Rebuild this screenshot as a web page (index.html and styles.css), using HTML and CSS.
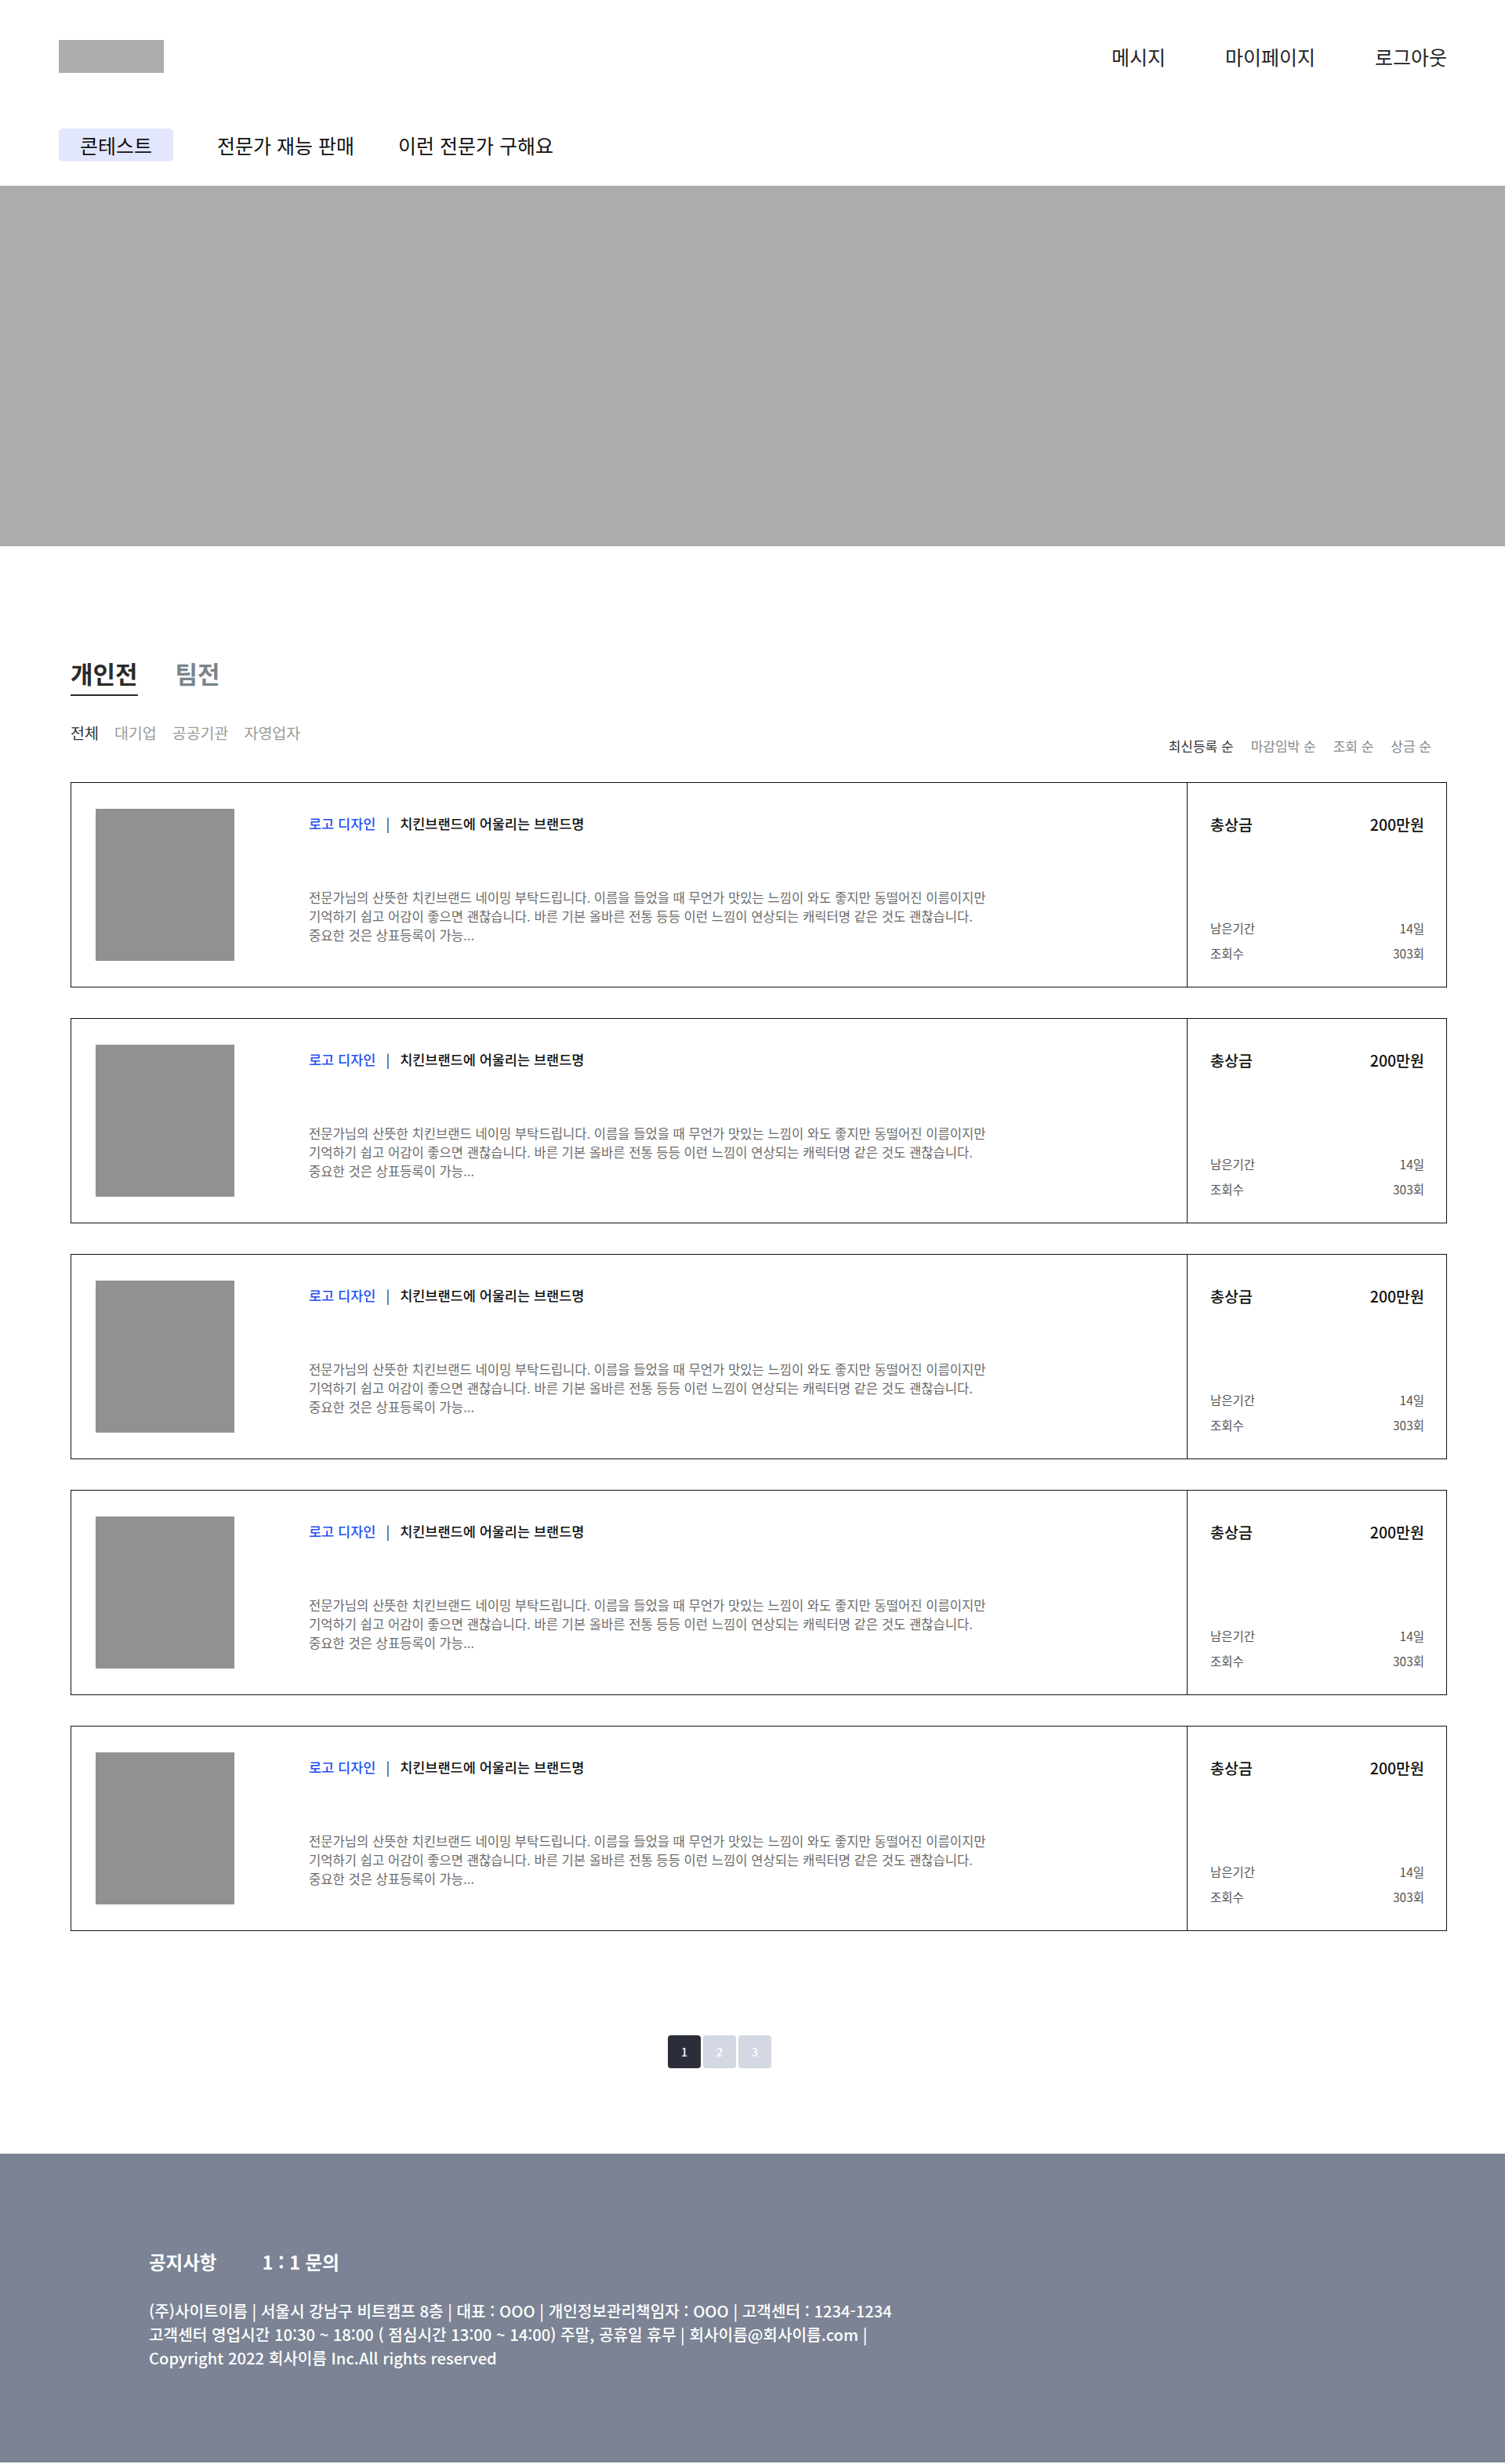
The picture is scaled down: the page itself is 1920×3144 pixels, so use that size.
FILE: index.html
```html
<!DOCTYPE html>
<html lang="ko">
<head>
<meta charset="utf-8">
<title>콘테스트</title>
<link rel="stylesheet" href="styles.css">
</head>
<body>
<header class="site-header">
  <div class="top-bar">
    <div class="logo"></div>
    <nav class="user-nav">
      <a href="#">메시지</a>
      <a href="#">마이페이지</a>
      <a href="#">로그아웃</a>
    </nav>
  </div>
  <nav class="main-nav">
    <a href="#" class="active">콘테스트</a>
    <a href="#">전문가 재능 판매</a>
    <a href="#">이런 전문가 구해요</a>
  </nav>
</header>

<section class="hero"></section>

<main class="content">
  <div class="tabs">
    <a href="#" class="tab active">개인전</a>
    <a href="#" class="tab">팀전</a>
  </div>

  <div class="filter-row">
    <div class="filters">
      <a href="#" class="active">전체</a>
      <a href="#">대기업</a>
      <a href="#">공공기관</a>
      <a href="#">자영업자</a>
    </div>
    <div class="sorts">
      <a href="#" class="active">최신등록 순</a>
      <a href="#">마감임박 순</a>
      <a href="#">조회 순</a>
      <a href="#">상금 순</a>
    </div>
  </div>

  <ul class="contest-list">
    <li class="card">
      <div class="card-main">
        <div class="thumb"></div>
        <div class="card-text">
          <p class="card-title"><span class="cat">로고 디자인</span><span class="sep">|</span>치킨브랜드에 어울리는 브랜드명</p>
          <p class="card-desc">전문가님의 산뜻한 치킨브랜드 네이밍 부탁드립니다. 이름을 들었을 때 무언가 맛있는 느낌이 와도 좋지만 동떨어진 이름이지만<br>기억하기 쉽고 어감이 좋으면 괜찮습니다. 바른 기본 올바른 전통 등등 이런 느낌이 연상되는 캐릭터명 같은 것도 괜찮습니다.<br>중요한 것은 상표등록이 가능...</p>
        </div>
      </div>
      <div class="card-side">
        <div class="prize"><span>총상금</span><span>200만원</span></div>
        <div class="meta">
          <div class="meta-row"><span>남은기간</span><span>14일</span></div>
          <div class="meta-row"><span>조회수</span><span>303회</span></div>
        </div>
      </div>
    </li>
    <li class="card">
      <div class="card-main">
        <div class="thumb"></div>
        <div class="card-text">
          <p class="card-title"><span class="cat">로고 디자인</span><span class="sep">|</span>치킨브랜드에 어울리는 브랜드명</p>
          <p class="card-desc">전문가님의 산뜻한 치킨브랜드 네이밍 부탁드립니다. 이름을 들었을 때 무언가 맛있는 느낌이 와도 좋지만 동떨어진 이름이지만<br>기억하기 쉽고 어감이 좋으면 괜찮습니다. 바른 기본 올바른 전통 등등 이런 느낌이 연상되는 캐릭터명 같은 것도 괜찮습니다.<br>중요한 것은 상표등록이 가능...</p>
        </div>
      </div>
      <div class="card-side">
        <div class="prize"><span>총상금</span><span>200만원</span></div>
        <div class="meta">
          <div class="meta-row"><span>남은기간</span><span>14일</span></div>
          <div class="meta-row"><span>조회수</span><span>303회</span></div>
        </div>
      </div>
    </li>
    <li class="card">
      <div class="card-main">
        <div class="thumb"></div>
        <div class="card-text">
          <p class="card-title"><span class="cat">로고 디자인</span><span class="sep">|</span>치킨브랜드에 어울리는 브랜드명</p>
          <p class="card-desc">전문가님의 산뜻한 치킨브랜드 네이밍 부탁드립니다. 이름을 들었을 때 무언가 맛있는 느낌이 와도 좋지만 동떨어진 이름이지만<br>기억하기 쉽고 어감이 좋으면 괜찮습니다. 바른 기본 올바른 전통 등등 이런 느낌이 연상되는 캐릭터명 같은 것도 괜찮습니다.<br>중요한 것은 상표등록이 가능...</p>
        </div>
      </div>
      <div class="card-side">
        <div class="prize"><span>총상금</span><span>200만원</span></div>
        <div class="meta">
          <div class="meta-row"><span>남은기간</span><span>14일</span></div>
          <div class="meta-row"><span>조회수</span><span>303회</span></div>
        </div>
      </div>
    </li>
    <li class="card">
      <div class="card-main">
        <div class="thumb"></div>
        <div class="card-text">
          <p class="card-title"><span class="cat">로고 디자인</span><span class="sep">|</span>치킨브랜드에 어울리는 브랜드명</p>
          <p class="card-desc">전문가님의 산뜻한 치킨브랜드 네이밍 부탁드립니다. 이름을 들었을 때 무언가 맛있는 느낌이 와도 좋지만 동떨어진 이름이지만<br>기억하기 쉽고 어감이 좋으면 괜찮습니다. 바른 기본 올바른 전통 등등 이런 느낌이 연상되는 캐릭터명 같은 것도 괜찮습니다.<br>중요한 것은 상표등록이 가능...</p>
        </div>
      </div>
      <div class="card-side">
        <div class="prize"><span>총상금</span><span>200만원</span></div>
        <div class="meta">
          <div class="meta-row"><span>남은기간</span><span>14일</span></div>
          <div class="meta-row"><span>조회수</span><span>303회</span></div>
        </div>
      </div>
    </li>
    <li class="card">
      <div class="card-main">
        <div class="thumb"></div>
        <div class="card-text">
          <p class="card-title"><span class="cat">로고 디자인</span><span class="sep">|</span>치킨브랜드에 어울리는 브랜드명</p>
          <p class="card-desc">전문가님의 산뜻한 치킨브랜드 네이밍 부탁드립니다. 이름을 들었을 때 무언가 맛있는 느낌이 와도 좋지만 동떨어진 이름이지만<br>기억하기 쉽고 어감이 좋으면 괜찮습니다. 바른 기본 올바른 전통 등등 이런 느낌이 연상되는 캐릭터명 같은 것도 괜찮습니다.<br>중요한 것은 상표등록이 가능...</p>
        </div>
      </div>
      <div class="card-side">
        <div class="prize"><span>총상금</span><span>200만원</span></div>
        <div class="meta">
          <div class="meta-row"><span>남은기간</span><span>14일</span></div>
          <div class="meta-row"><span>조회수</span><span>303회</span></div>
        </div>
      </div>
    </li>
  </ul>

  <div class="pagination">
    <a href="#" class="page active">1</a>
    <a href="#" class="page">2</a>
    <a href="#" class="page">3</a>
  </div>
</main>

<footer class="site-footer">
  <div class="footer-links">
    <a href="#">공지사항</a>
    <a href="#">1 : 1 문의</a>
  </div>
  <p class="footer-info">(주)사이트이름 | 서울시 강남구 비트캠프 8층 | 대표 : OOO | 개인정보관리책임자 : OOO | 고객센터 : 1234-1234<br>고객센터 영업시간 10:30 ~ 18:00 ( 점심시간 13:00 ~ 14:00) 주말, 공휴일 휴무 | 회사이름@회사이름.com |<br>Copyright 2022 회사이름 Inc.All rights reserved</p>
</footer>
</body>
</html>
```
FILE: styles.css
```css
* { box-sizing: border-box; }
html, body { margin: 0; padding: 0; }
body {
  font-family: "Noto Sans CJK KR", "Noto Sans", sans-serif;
  color: #222;
  background: #fff;
}
a { color: inherit; text-decoration: none; }
p { margin: 0; }
ul { margin: 0; padding: 0; list-style: none; }

/* header */
.top-bar {
  display: flex;
  justify-content: space-between;
  align-items: center;
  padding: 51px 74px 0 75px;
}
.logo {
  width: 134px;
  height: 42px;
  background: #adadad;
}
.user-nav {
  display: flex;
  gap: 76px;
  font-size: 25px;
  line-height: 42px;
  color: #222;
}
.main-nav {
  display: flex;
  gap: 56px;
  margin-top: 71px;
  padding-left: 75px;
  font-size: 25px;
}
.main-nav a {
  display: block;
  height: 42px;
  line-height: 42px;
  border-radius: 5px;
  color: #111;
}
.main-nav a.active {
  padding: 0 27px;
  background: #e1e6fd;
}

.hero {
  margin-top: 31px;
  height: 460px;
  background: #acacac;
}

/* content */
.content {
  padding: 0 74px 0 90px;
}
.tabs {
  display: flex;
  gap: 48px;
  margin-top: 142px;
}
.tab {
  font-size: 31px;
  font-weight: 700;
  line-height: 40px;
  padding-bottom: 7px;
  color: #7b848c;
  border-bottom: 2px solid transparent;
}
.tab.active {
  color: #2b2b2b;
  border-bottom-color: #2b2b2b;
}

.filter-row {
  display: flex;
  justify-content: space-between;
  align-items: flex-start;
  height: 76px;
  margin-top: 34px;
}
.filters {
  display: flex;
  gap: 20px;
  font-size: 19.5px;
  line-height: 26px;
  color: #9a9a9a;
}
.filters a.active { color: #333; }
.sorts {
  display: flex;
  gap: 22px;
  margin-top: 18px;
  margin-right: 20px;
  font-size: 17px;
  line-height: 24px;
  color: #888;
}
.sorts a.active { color: #333; }

/* cards */
.contest-list {
  display: flex;
  flex-direction: column;
  gap: 39px;
}
.card {
  display: flex;
  height: 262px;
  border: 1px solid #111;
}
.card-main {
  flex: 1;
  display: flex;
  align-items: center;
  padding-left: 31px;
}
.thumb {
  width: 177px;
  height: 194px;
  background: #919191;
  flex: none;
}
.card-text {
  align-self: flex-start;
  margin-left: 95px;
  padding-top: 40px;
}
.card-title {
  font-size: 17.5px;
  font-weight: 500;
  line-height: 24px;
  color: #111;
}
.card-title .cat { color: #1e4ff2; }
.card-title .sep {
  display: inline-block;
  margin: 0 13px;
  color: #222;
  font-weight: 400;
}
.card-desc {
  margin-top: 70px;
  font-size: 16.6px;
  line-height: 24px;
  color: #6c6c6c;
  white-space: nowrap;
}
.card-side {
  width: 331px;
  flex: none;
  border-left: 1px solid #111;
  padding: 41px 28px 27px 29px;
  display: flex;
  flex-direction: column;
  justify-content: space-between;
}
.prize {
  display: flex;
  justify-content: space-between;
  font-size: 19.5px;
  font-weight: 500;
  line-height: 24px;
  color: #111;
}
.meta-row {
  display: flex;
  justify-content: space-between;
  font-size: 15.5px;
  line-height: 32px;
  color: #555;
}

/* pagination */
.pagination {
  display: flex;
  gap: 3px;
  margin-top: 133px;
  padding-left: 762px;
}
.page {
  width: 42px;
  height: 42px;
  border-radius: 4px;
  background: #d4d8e3;
  color: #fff;
  font-size: 14px;
  font-weight: 500;
  display: flex;
  align-items: center;
  justify-content: center;
}
.page.active { background: #2b2e3a; }

/* footer */
.site-footer {
  margin-top: 109px;
  height: 394px;
  background: #7b8394;
  padding: 123px 0 0 190px;
  color: #fff;
}
.footer-links {
  display: flex;
  gap: 58px;
  font-size: 23.5px;
  font-weight: 700;
  line-height: 30px;
}
.footer-info {
  margin-top: 33px;
  font-size: 20.2px;
  font-weight: 500;
  line-height: 30px;
}
```
